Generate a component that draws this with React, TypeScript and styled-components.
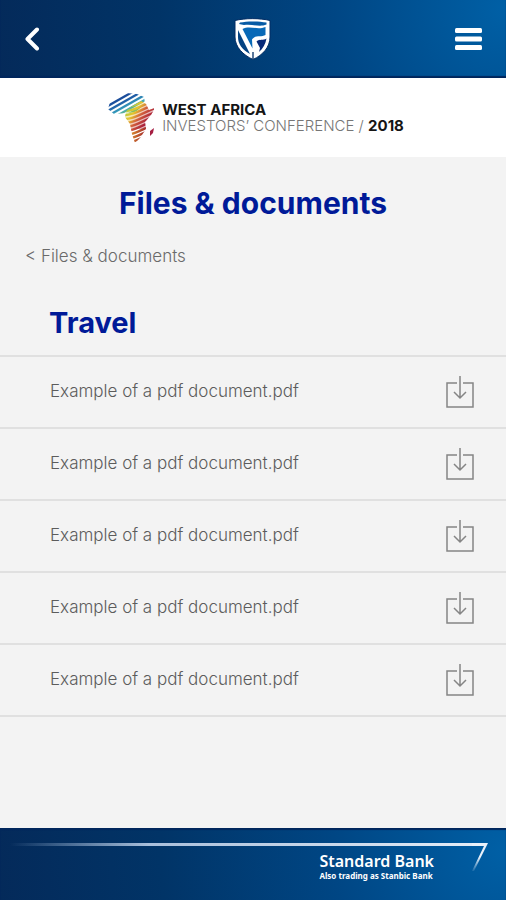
import React from "react";
import styled, { createGlobalStyle } from "styled-components";

const GlobalStyle = createGlobalStyle`
  *, *::before, *::after { box-sizing: border-box; }
  body {
    margin: 0;
    background: #f3f3f3;
    font-family: Inter, "Liberation Sans", sans-serif;
  }
  h1, h2, p, ul { margin: 0; padding: 0; }
`;

const Screen = styled.div`
  min-height: 100vh;
  display: flex;
  flex-direction: column;
`;

const TopBar = styled.header`
  height: 78px;
  padding: 0 24px;
  display: grid;
  grid-template-columns: 1fr auto 1fr;
  align-items: center;
  background: radial-gradient(circle at 100% 10%, #0060a6 0%, #004684 34%, #013467 68%, #042a5a 100%) no-repeat;
  box-shadow: inset 0 -2px 1px #00265c;
`;

const IconButton = styled.button<{ $end?: boolean }>`
  justify-self: ${({ $end }) => ($end ? "end" : "start")};
  display: flex;
  padding: 0;
  border: 0;
  background: none;
  color: #fff;
  cursor: pointer;
`;

const Brand = styled.section`
  height: 79px;
  display: flex;
  align-items: center;
  justify-content: center;
  gap: 8px;
  padding-left: 6px;
  background: #fff;
`;

const BrandText = styled.p`
  color: #767676;
  font-size: 15px;
  font-weight: 300;
  line-height: 16px;
  white-space: nowrap;

  strong {
    color: #151515;
    font-weight: 700;
  }
`;

const Main = styled.main`
  flex: 1;
`;

const PageTitle = styled.h1`
  padding-top: 28px;
  color: #001a98;
  font-size: 30px;
  font-weight: 700;
  line-height: 36px;
  text-align: center;
`;

const BackLink = styled.a`
  display: block;
  width: fit-content;
  margin: 24px 0 0 25px;
  color: #6a6a6a;
  font-size: 17px;
  font-weight: 300;
  line-height: 22px;
  text-decoration: none;
`;

const SectionTitle = styled.h2`
  margin: 38px 0 14px;
  padding-left: 49px;
  color: #001a98;
  font-size: 29px;
  font-weight: 700;
  line-height: 36px;
`;

const FileList = styled.ul`
  list-style: none;
  border-top: 2px solid #e0e0e0;
`;

const FileRow = styled.li`
  padding: 18px 31px 18px 50px;
  display: flex;
  align-items: center;
  justify-content: space-between;

  & + & {
    border-top: 2px solid #e0e0e0;
  }

  &:last-child {
    border-bottom: 2px solid #e0e0e0;
  }
`;

const FileName = styled.span`
  padding-bottom: 2px;
  color: #5c5c5c;
  font-size: 17px;
  font-weight: 300;
  line-height: 22px;
`;

const DownloadButton = styled(IconButton)`
  color: #858585;
`;

const Footer = styled.footer`
  height: 72px;
  padding: 15px 18px 0 10px;
  background: radial-gradient(circle at 100% 30%, #0060a6 0%, #004684 34%, #013467 68%, #042a5a 100%) no-repeat;
  box-shadow: inset 0 2px 1px #00265c;
  display: flex;
`;

const FooterMain = styled.div`
  flex: 1;
`;

const FooterRule = styled.div`
  height: 3px;
  background: linear-gradient(90deg, transparent, #a9bfdb 30%, #e3ecf7);
`;

const Signature = styled.div`
  width: fit-content;
  margin-left: auto;
  padding: 6px 38px 0 0;
  color: #fff;
  font-family: "Noto Sans", sans-serif;
`;

const BankName = styled.p`
  font-size: 16px;
  font-weight: 600;
  line-height: 18px;
`;

const BankNote = styled.p`
  font-size: 8px;
  font-weight: 700;
  line-height: 12px;
`;

const files = Array.from({ length: 5 }, (_, id) => ({ id, name: "Example of a pdf document.pdf" }));

const BackIcon = () => (
  <svg width="16" height="24" viewBox="0 0 16 24" fill="none" stroke="currentColor" strokeWidth="4" strokeLinecap="round" strokeLinejoin="round" aria-hidden="true">
    <path d="M13 2.500 3.500 12 13 21.500" />
  </svg>
);

const MenuIcon = () => (
  <svg width="27" height="24" viewBox="0 0 27 24" fill="currentColor" aria-hidden="true">
    <rect y="1" width="27" height="5" rx="1.500" />
    <rect y="9.500" width="27" height="5" rx="1.500" />
    <rect y="18" width="27" height="5" rx="1.500" />
  </svg>
);

const Shield = () => (
  <svg width="40" height="46" viewBox="1 0 40 46" role="img" aria-label="Standard Bank">
    <path d="M3 4.500C13 2 28 2 38 4.500V21C38 31 31 39 21 43.500 11 39 3 31 3 21Z" fill="#fff" stroke="#032d64" strokeWidth="1" />
    <path d="M8 6.500C15 5 26 5 34.500 6.500V8.500C27 11.500 20 7.500 12 9L7 8Z" fill="#075ba5" />
    <path d="M10.500 13C18 9 25 14.500 33.500 11V19C29 21.500 23 18.500 20 23.500L20.500 32.500Z" fill="#0869b7" />
    <path d="M6 14 18 38C10 33.500 6 28 6 21Z" fill="#034282" />
    <path d="M24.500 25.500C28 22.500 31 25 34.500 22.500C33.500 28 31 32.500 27 36L28 32Z" fill="#082a78" />
    <path d="M21 36v7" stroke="#032d64" strokeWidth="1.300" />
  </svg>
);

const northStripes = [0, 1, 2, 3, 4, 5];
const southStripes = Array.from({ length: 12 }, (_, i) => 9 + i * 4);

const AfricaMark = () => (
  <svg width="46" height="50" viewBox="0 0 46 50" role="img" aria-label="Africa">
    <defs>
      <linearGradient id="north" gradientUnits="userSpaceOnUse" x1="12" y1="2" x2="22" y2="22">
        <stop offset="0" stopColor="#163f91" />
        <stop offset=".35" stopColor="#2160a8" />
        <stop offset=".65" stopColor="#39a7bf" />
        <stop offset="1" stopColor="#9cc447" />
      </linearGradient>
      <linearGradient id="south" gradientUnits="userSpaceOnUse" x1="20" y1="16" x2="38" y2="30">
        <stop offset="0" stopColor="#b3cb3a" />
        <stop offset=".3" stopColor="#e6c52f" />
        <stop offset=".6" stopColor="#d2603c" />
        <stop offset="1" stopColor="#a91f3b" />
      </linearGradient>
      <linearGradient id="cape" gradientUnits="userSpaceOnUse" x1="22" y1="38" x2="36" y2="42">
        <stop offset="0" stopColor="#df9a2e" />
        <stop offset="1" stopColor="#a72d2e" />
      </linearGradient>
      <clipPath id="northShape">
        <path d="M2 9 18 0 29 1 36 4 37 10 28 19 19 20 6 21 0 16Z" />
      </clipPath>
      <clipPath id="southShape">
        <path d="M21 15 33 8 38 11 41 17 47 15 43 22 37 29 38 36 32 45 27 50 24 41 22 31 17 24 18 19Z" />
      </clipPath>
    </defs>
    <g clipPath="url(#southShape)" fill="url(#south)" opacity=".35">
      <path d="M14 8h34v28H14Z" />
    </g>
    <g clipPath="url(#northShape)" stroke="url(#north)" strokeWidth="2.300">
      {northStripes.map((i) => (
        <path key={i} d={`M-2 ${14 + i * 5} 42 ${-11 + i * 5}`} />
      ))}
    </g>
    <g clipPath="url(#southShape)" fill="none" strokeWidth="2.400">
      {southStripes.map((y) => (
        <path key={y} d={`M15 ${y + 5}C22 ${y + 6} 29 ${y + 2} 47 ${y - 6}`} stroke={y > 36 ? "url(#cape)" : "url(#south)"} />
      ))}
    </g>
    <path d="m42 38 4-3-1 5-3 3Z" fill="#a61f43" />
  </svg>
);

const DownloadIcon = () => (
  <svg width="30" height="34" viewBox="0 0 30 34" fill="none" stroke="currentColor" strokeWidth="1.500" aria-hidden="true">
    <path d="M12 8H2v24h26V8H18" />
    <path d="M15 1v22M9 17l6 6 6-6" />
  </svg>
);

const CornerStroke = () => (
  <svg width="16" height="28" viewBox="0 0 16 28" aria-hidden="true">
    <defs>
      <linearGradient id="corner" x1="0" y1="0" x2="0" y2="1">
        <stop offset=".5" stopColor="#e9f1fa" />
        <stop offset="1" stopColor="#e9f1fa" stopOpacity=".1" />
      </linearGradient>
    </defs>
    <path d="M0 0h16L2 28H0L12 3H0Z" fill="url(#corner)" />
  </svg>
);

export default function App() {
  return (
    <Screen>
      <GlobalStyle />
      <TopBar>
        <IconButton aria-label="Back"><BackIcon /></IconButton>
        <Shield />
        <IconButton $end aria-label="Menu"><MenuIcon /></IconButton>
      </TopBar>
      <Brand>
        <AfricaMark />
        <BrandText>
          <strong>WEST AFRICA</strong>
          <br />
          INVESTORS’ CONFERENCE / <strong>2018</strong>
        </BrandText>
      </Brand>
      <Main>
        <PageTitle>Files &amp; documents</PageTitle>
        <BackLink href="#files">&lt; Files &amp; documents</BackLink>
        <SectionTitle>Travel</SectionTitle>
        <FileList>
          {files.map(({ id, name }) => (
            <FileRow key={id}>
              <FileName>{name}</FileName>
              <DownloadButton aria-label={`Download ${name}`}><DownloadIcon /></DownloadButton>
            </FileRow>
          ))}
        </FileList>
      </Main>
      <Footer>
        <FooterMain>
          <FooterRule />
          <Signature>
            <BankName>Standard Bank</BankName>
            <BankNote>Also trading as Stanbic Bank</BankNote>
          </Signature>
        </FooterMain>
        <CornerStroke />
      </Footer>
    </Screen>
  );
}
